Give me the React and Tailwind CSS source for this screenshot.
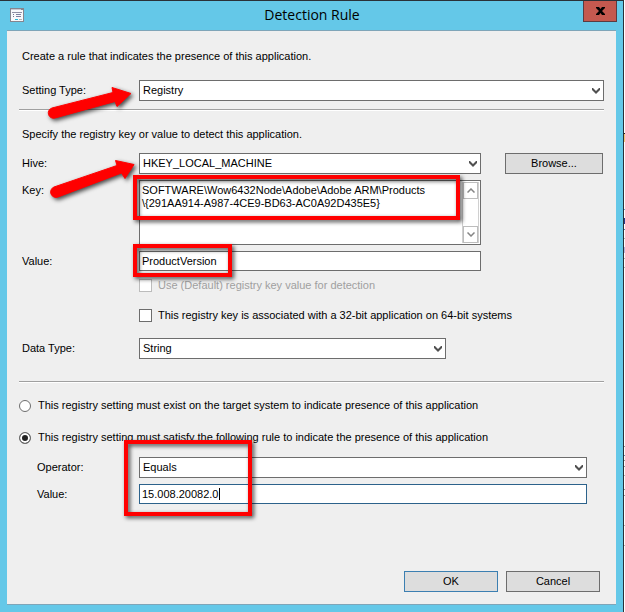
import React from 'react';

const FIELD = 'border border-[#6d6d6d] bg-white text-black outline-none rounded-none';

const BACKDROP_MARKS = [
  { y: 133, h: 1, color: '#222222' },
  { y: 134, h: 8, color: '#f3c877' },
  { y: 209, h: 1, color: '#6f9fd0' },
  { y: 218, h: 6, color: '#2b3a86' },
  { y: 229, h: 1, color: '#4d7fb5' },
  { y: 238, h: 1, color: '#b5b5b5' },
  { y: 247, h: 6, color: '#b9b5dc' },
  { y: 258, h: 1, color: '#b5b5b5' },
  { y: 267, h: 1, color: '#b5b5b5' },
  { y: 446, h: 1, color: '#999999' },
  { y: 455, h: 1, color: '#6f8fb0' },
  { y: 460, h: 1, color: '#999999' },
  { y: 466, h: 1, color: '#999999' },
  { y: 475, h: 1, color: '#b5b5b5' },
  { y: 489, h: 1, color: '#999999' },
  { y: 495, h: 1, color: '#999999' },
  { y: 525, h: 1, color: '#b5b5b5' },
  { y: 545, h: 1, color: '#b5b5b5' },
];

function DropDown({ id, options, className }) {
  return (
    <div className={`relative ${className}`}>
      <select id={id} className={`${FIELD} block h-[21px] w-full appearance-none pl-[3px] pr-5`}>
        {options.map((option) => (
          <option key={option}>{option}</option>
        ))}
      </select>
      <svg
        className="pointer-events-none absolute right-1 top-2 h-[6px] w-[8px]"
        viewBox="0 0 8 6"
        aria-hidden="true"
      >
        <path d="M0 0h1l3 3 3-3h1v2L4 6 0 2z" fill="#505050" />
      </svg>
    </div>
  );
}

function ScrollArrow({ up }) {
  return (
    <button
      type="button"
      aria-label={up ? 'Scroll up' : 'Scroll down'}
      className="flex h-[17px] w-full items-center justify-center border border-[#bdbdbd] bg-white"
    >
      <svg className="h-[5px] w-[8px]" viewBox="0 0 8 5" fill="none" stroke="#858585" strokeWidth="1.5" aria-hidden="true">
        <path d={up ? 'M.5 4.5 4 1l3.500 3.500' : 'M.5.5 4 4 7.500.5'} />
      </svg>
    </button>
  );
}

function Divider({ className }) {
  return <hr className={`h-[2px] border-0 border-t border-[#a0a0a0] bg-white ${className}`} />;
}

function RuleIcon() {
  return (
    <svg className="h-[14px] w-[14px]" viewBox="0 0 14 14" aria-hidden="true" shapeRendering="crispEdges">
      <rect width="14" height="14" fill="#85858f" />
      <rect x="1" y="2" width="12" height="11" fill="#f8f8fb" />
      <rect x="1" y="1" width="10" height="1" fill="#c9c9d3" />
      <rect x="2" y="4" width="10" height="1" fill="#8f8fa5" />
      <rect x="3" y="6" width="1" height="1" fill="#74748c" />
      <rect x="6" y="6" width="5" height="1" fill="#8181a0" />
      <rect x="3" y="8" width="1" height="1" fill="#74748c" />
      <rect x="6" y="8" width="5" height="1" fill="#8181a0" />
      <rect x="5" y="11" width="3" height="1" fill="#25b8d4" />
      <rect x="9" y="11" width="3" height="1" fill="#b5b5b5" />
    </svg>
  );
}

// Red call-outs drawn over the form: two arrows and three frames.
function Annotations() {
  return (
    <svg
      className="pointer-events-none absolute left-0 top-0 h-[612px] w-[480px] drop-shadow-[2px_2px_2px_rgba(0,0,0,0.7)]"
      viewBox="0 0 480 612"
      aria-hidden="true"
    >
      <g fill="#ff0000" stroke="#ff0000" strokeLinejoin="round">
        <path d="M52 107 113 91.500 112 86.500 131 92.500 117 105.500 115 100.500 55 117A5 5 0 0 1 52 107z" />
        <path d="M54 186 117 164.500 115.500 159.500 134 163.500 125 177.500 121.500 172 58 196A5 5 0 0 1 54 186z" />
      </g>
      <g fill="none" stroke="#ff0000">
        <rect x="135" y="176" width="323" height="41" strokeWidth="4" />
        <rect x="135" y="245" width="95" height="29" strokeWidth="4" />
        <rect x="126" y="441" width="124" height="72" strokeWidth="4" />
      </g>
    </svg>
  );
}

export default function App() {
  return (
    <div className="flex min-h-screen bg-white font-['Liberation_Sans',Arial,sans-serif] text-[11px] leading-[13px] text-black">
      <div className="relative flex flex-1 flex-col border-r border-t border-[#2a3138] bg-[#64c8e8] px-[7px] pb-[7px]">
        <header className="-mr-px flex h-[29px] items-start justify-between">
          <div className="w-[34px] pl-[3px] pt-[7px]">
            <RuleIcon />
          </div>
          <h1 className="pt-1 font-['Open_Sans',sans-serif] text-[14px] leading-5">Detection Rule</h1>
          <button
            type="button"
            aria-label="Close"
            className="flex h-[21px] w-[34px] items-center justify-center border border-t-0 border-[#5b3b41] bg-[#c4594f]"
          >
            <svg className="h-[8px] w-[9px]" viewBox="0 0 9 8" aria-hidden="true">
              <path d="M0 0h3l1.500 2L6 0h3v1L6 4l3 3v1H6L4.500 6 3 8H0V7l3-3-3-3z" fill="#000" />
            </svg>
          </button>
        </header>

        <form
          className="flex flex-1 flex-col border-b border-t border-[#7fa5b8] bg-[#efefef] px-3 pb-3"
          onSubmit={(e) => e.preventDefault()}
        >
          <p className="mt-[19px] pl-[3px]">Create a rule that indicates the presence of this application.</p>

          <div className="mt-[17px] flex items-center">
            <label htmlFor="setting-type" className="w-[120px] pl-[3px]">Setting Type:</label>
            <DropDown id="setting-type" options={['Registry', 'File System', 'Windows Installer']} className="flex-1" />
          </div>

          <Divider className="mt-2" />

          <p className="mt-[17px] pl-[3px]">Specify the registry key or value to detect this application.</p>

          <div className="mt-3 flex items-center">
            <label htmlFor="hive" className="w-[120px] pl-[3px]">Hive:</label>
            <DropDown id="hive" options={['HKEY_LOCAL_MACHINE', 'HKEY_CURRENT_USER']} className="flex-1" />
            <button type="button" className="ml-6 mr-px h-[21px] w-[98px] border border-[#6d6d6d] bg-[#dddddd]">
              Browse...
            </button>
          </div>

          <div className="mr-[123px] mt-[6px] flex items-start">
            <label htmlFor="key" className="w-[120px] pl-[3px] pt-1">Key:</label>
            <div className={`${FIELD} flex h-[65px] flex-1 p-px`}>
              <textarea
                id="key"
                className="flex-1 resize-none overflow-hidden whitespace-pre pl-px pt-[2px] leading-[13px] outline-none"
                defaultValue={'SOFTWARE\\Wow6432Node\\Adobe\\Adobe ARM\\Products\n\\{291AA914-A987-4CE9-BD63-AC0A92D435E5}'}
              />
              <div className="flex w-[17px] flex-col justify-between border-x border-[#d0d0d0]">
                <ScrollArrow up />
                <ScrollArrow />
              </div>
            </div>
          </div>

          <div className="mr-[123px] mt-[6px] flex items-center">
            <label htmlFor="value" className="w-[120px] pl-[3px]">Value:</label>
            <input id="value" type="text" defaultValue="ProductVersion" className={`${FIELD} h-5 min-w-0 flex-1 px-[2px]`} />
          </div>

          <label className="ml-[120px] mt-2 flex items-center gap-[6px] text-[#a0a0a0]">
            <input type="checkbox" disabled className="h-[13px] w-[13px] appearance-none border border-[#bcbcbc] bg-white" />
            Use (Default) registry key value for detection
          </label>
          <label className="ml-[120px] mt-[17px] flex items-center gap-[6px]">
            <input type="checkbox" className="h-[13px] w-[13px] appearance-none border border-[#6d6d6d] bg-white" />
            This registry key is associated with a 32-bit application on 64-bit systems
          </label>

          <div className="mt-4 flex items-center">
            <label htmlFor="data-type" className="w-[120px] pl-[3px]">Data Type:</label>
            <DropDown id="data-type" options={['String', 'Integer', 'Version']} className="w-[307px]" />
          </div>

          <Divider className="mt-[22px]" />

          <label className="mt-4 flex items-center gap-[7px]">
            <input
              type="radio"
              name="rule"
              className="h-3 w-3 appearance-none rounded-full border border-[#6d6d6d] bg-white checked:bg-[#222222] checked:shadow-[inset_0_0_0_2px_#ffffff]"
            />
            This registry setting must exist on the target system to indicate presence of this application
          </label>
          <label className="mt-[19px] flex items-center gap-[7px]">
            <input
              type="radio"
              name="rule"
              defaultChecked
              className="h-3 w-3 appearance-none rounded-full border border-[#6d6d6d] bg-white checked:bg-[#222222] checked:shadow-[inset_0_0_0_2px_#ffffff]"
            />
            This registry setting must satisfy the following rule to indicate the presence of this application
          </label>

          <div className="mr-[17px] mt-[13px] flex items-center">
            <label htmlFor="operator" className="w-[120px] pl-[18px]">Operator:</label>
            <DropDown id="operator" options={['Equals', 'Not equal to', 'Begins with']} className="flex-1" />
          </div>
          <div className="mr-[17px] mt-[6px] flex items-center">
            <label htmlFor="rule-value" className="w-[120px] pl-[18px]">Value:</label>
            <div className="relative flex flex-1">
              <input
                id="rule-value"
                type="text"
                defaultValue="15.008.20082.0"
                className="h-5 min-w-0 flex-1 border border-[#2c628b] bg-white px-[2px] caret-transparent outline-none"
              />
              <span className="pointer-events-none absolute left-20 top-1 h-3 w-px bg-black" aria-hidden="true" />
            </div>
          </div>

          <div className="mr-1 mt-auto flex justify-end gap-2 pt-4">
            <button type="submit" className="h-[21px] w-[94px] border border-[#3c7fb1] bg-[#dddddd]">OK</button>
            <button type="button" className="h-[21px] w-[94px] border border-[#6d6d6d] bg-[#dddddd]">Cancel</button>
          </div>
        </form>

        <Annotations />
      </div>

      <svg className="h-[612px] w-px" viewBox="0 0 1 612" aria-hidden="true" shapeRendering="crispEdges">
        {BACKDROP_MARKS.map((mark) => (
          <rect key={mark.y} y={mark.y} width="1" height={mark.h} fill={mark.color} />
        ))}
      </svg>
    </div>
  );
}
